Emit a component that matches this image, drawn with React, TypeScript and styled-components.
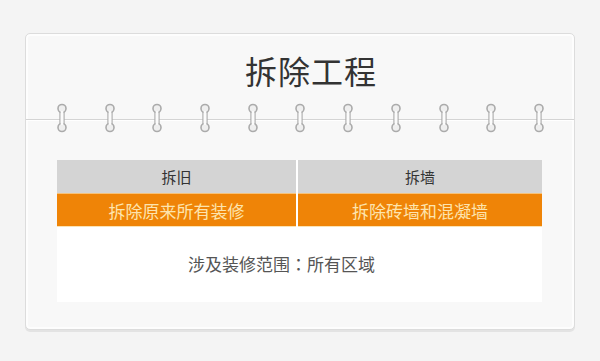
import React from "react";
import styled, { createGlobalStyle } from "styled-components";

const GlobalStyle = createGlobalStyle`
  html, body {
    margin: 0;
    padding: 0;
    background: #f4f4f4;
    font-family: "Noto Sans CJK SC", "Noto Sans", sans-serif;
  }
`;

const Page = styled.div`
  width: 600px;
  height: 361px;
  padding: 33px 25px 0;
  box-sizing: border-box;
`;

const Card = styled.div`
  width: 550px;
  height: 297px;
  box-sizing: border-box;
  background: #f8f8f8;
  border: 1px solid #dcdcdc;
  border-radius: 5px;
  box-shadow: inset 0 0 0 2px #fdfdfd, 0 2px 0 #e3e3e3;
  display: flex;
  flex-direction: column;
`;

const Title = styled.h1`
  margin: 0;
  padding: 20px 0 0 22px;
  font-size: 32px;
  line-height: 32px;
  font-weight: 400;
  color: #333;
  text-align: center;
  letter-spacing: 1px;
`;

const RingStrip = styled.div`
  margin-top: 17px;
  height: 30px;
  display: flex;
  justify-content: space-between;
  padding: 0 29px 0 30px;
  background:
    linear-gradient(#d4d4d4, #d4d4d4) 0 16px / 100% 1px no-repeat,
    linear-gradient(#ffffff, #ffffff) 0 17px / 100% 1px no-repeat;
`;

const RingSvg = styled.svg`
  width: 12px;
  height: 30px;
  display: block;
`;

const Ring = () => (
  <RingSvg viewBox="0 0 12 30">
    <rect x="4" y="7" width="4" height="16" rx="1.5" fill="#fafafa" stroke="#ababab" strokeWidth="1.3" />
    <circle cx="6" cy="5.5" r="4" fill="#efefef" stroke="#ababab" strokeWidth="1.6" />
    <circle cx="6" cy="24.5" r="4" fill="#efefef" stroke="#ababab" strokeWidth="1.6" />
    <rect x="4.7" y="8" width="2.6" height="14" fill="#fbfbfb" />
  </RingSvg>
);

const Table = styled.div`
  margin: 27px 32px 0 31px;
  background: #fff;
  display: grid;
  grid-template-columns: 239px 1fr;
  column-gap: 2px;
`;

const HeadCell = styled.div`
  height: 33px;
  background: #d4d4d4;
  color: #333;
  font-size: 15px;
  display: flex;
  align-items: center;
  justify-content: center;
`;

const OrangeCell = styled.div`
  height: 34px;
  box-sizing: border-box;
  background: #ef8407;
  border-top: 1px solid #f6c27a;
  border-bottom: 1px solid #fbe3b4;
  color: #fde4ae;
  font-size: 17px;
  display: flex;
  align-items: center;
  justify-content: center;
`;

const Info = styled.div`
  grid-column: 1 / -1;
  height: 75px;
  display: flex;
  align-items: center;
  justify-content: center;
  padding-right: 36px;
  padding-bottom: 2px;
  box-sizing: border-box;
  color: #555;
  font-size: 17px;
`;

const Colon = styled.span`
  font-family: "Noto Sans CJK TC", "Noto Sans CJK SC", sans-serif;
`;

export default function App() {
  const rings = Array.from({ length: 11 });
  return (
    <>
      <GlobalStyle />
      <Page>
        <Card>
          <Title>拆除工程</Title>
          <RingStrip>
            {rings.map((_, i) => (
              <Ring key={i} />
            ))}
          </RingStrip>
          <Table>
            <HeadCell>拆旧</HeadCell>
            <HeadCell>拆墙</HeadCell>
            <OrangeCell>拆除原来所有装修</OrangeCell>
            <OrangeCell>拆除砖墙和混凝墙</OrangeCell>
            <Info>
              涉及装修范围<Colon>：</Colon>所有区域
            </Info>
          </Table>
        </Card>
      </Page>
    </>
  );
}
